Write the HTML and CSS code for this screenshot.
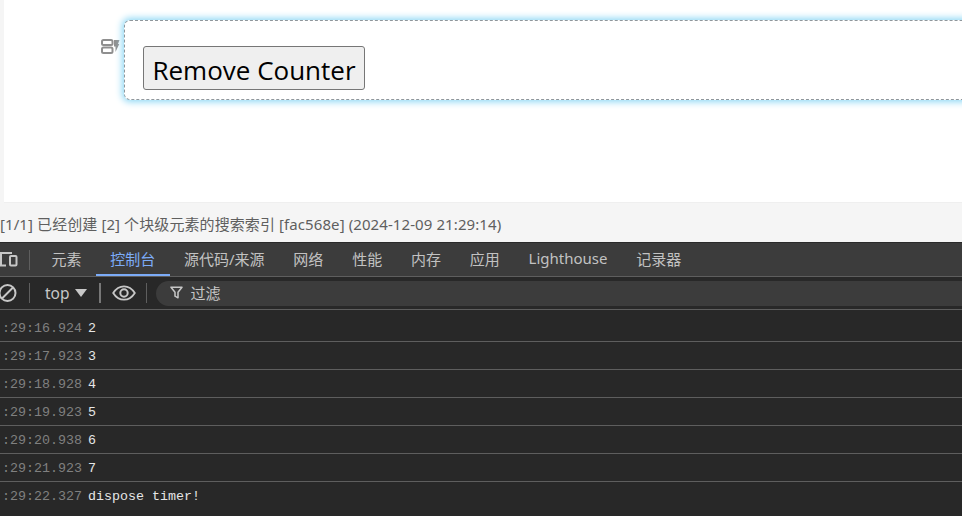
FILE: index.html
```html
<!DOCTYPE html>
<html lang="zh">
<head>
<meta charset="utf-8">
<title>Remove Counter</title>
<link rel="stylesheet" href="styles.css">
</head>
<body>
<main class="editor">
  <div class="block-row">
    <svg class="block-icon" width="19" height="15" viewBox="0 0 19 15" aria-hidden="true">
      <rect x="1" y="1" width="10.500" height="5" rx="1.500" fill="none" stroke="#8f8f8f" stroke-width="2"/>
      <rect x="1" y="8.500" width="10.500" height="5.500" rx="1.500" fill="none" stroke="#8f8f8f" stroke-width="2"/>
      <path d="M13 1H18.500L17 5H18.300L14.500 13V7.500H13Z" fill="#8f8f8f"/>
    </svg>
    <div class="block">
      <button class="remove" type="button">Remove Counter</button>
    </div>
  </div>
</main>
<div class="status">[1/1] 已经创建 [2] 个块级元素的搜索索引 [fac568e] (2024-12-09 21:29:14)</div>
<section class="devtools">
  <nav class="tabs">
    <svg class="device" width="18" height="17" viewBox="0 0 18 17" aria-hidden="true">
      <path d="M-2 2H12M-2 14.500H6M1 2V14.500" fill="none" stroke="#c7c7c7" stroke-width="2"/>
      <rect x="10" y="5" width="6.500" height="9.500" rx="1" fill="none" stroke="#c7c7c7" stroke-width="2"/>
    </svg>
    <span class="divider"></span>
    <a class="tab">元素</a>
    <a class="tab active">控制台</a>
    <a class="tab">源代码/来源</a>
    <a class="tab">网络</a>
    <a class="tab">性能</a>
    <a class="tab">内存</a>
    <a class="tab">应用</a>
    <a class="tab">Lighthouse</a>
    <a class="tab">记录器</a>
  </nav>
  <div class="toolbar">
    <svg class="clear" width="17" height="20" viewBox="0 0 17 20" aria-hidden="true">
      <circle cx="7.500" cy="10" r="8" fill="none" stroke="#c7c7c7" stroke-width="2"/>
      <path d="M2 15.500L13 4.500" stroke="#c7c7c7" stroke-width="2"/>
    </svg>
    <span class="sep first"></span>
    <span class="context">top</span>
    <span class="caret"></span>
    <span class="sep strong"></span>
    <svg class="eye" width="24" height="16" viewBox="0 0 24 16" aria-hidden="true">
      <path d="M1.200 8C4 3.500 7.700 1.300 12 1.300S20 3.500 22.800 8C20 12.500 16.300 14.700 12 14.700S4 12.500 1.200 8Z" fill="none" stroke="#c7c7c7" stroke-width="1.800"/>
      <circle cx="12" cy="8" r="3.700" fill="none" stroke="#c7c7c7" stroke-width="2"/>
    </svg>
    <span class="sep"></span>
    <div class="filter">
      <svg width="13" height="13" viewBox="0 0 13 13" aria-hidden="true">
        <path d="M1 1.200H12L8 6.200V11.800L5 10.200V6.200Z" fill="none" stroke="#c7c7c7" stroke-width="1.500" stroke-linejoin="round"/>
      </svg>
      <span>过滤</span>
    </div>
  </div>
  <ul class="log">
    <li><time>:29:16.924</time><span>2</span></li>
    <li><time>:29:17.923</time><span>3</span></li>
    <li><time>:29:18.928</time><span>4</span></li>
    <li><time>:29:19.923</time><span>5</span></li>
    <li><time>:29:20.938</time><span>6</span></li>
    <li><time>:29:21.923</time><span>7</span></li>
    <li><time>:29:22.327</time><span>dispose timer!</span></li>
  </ul>
</section>
</body>
</html>
```
FILE: styles.css
```css
* {
  box-sizing: border-box;
}

html,
body {
  margin: 0;
  height: 100%;
  overflow: hidden;
}

body {
  display: flex;
  flex-direction: column;
  width: 962px;
  height: 516px;
  font-family: "Noto Sans", "Noto Sans CJK SC", sans-serif;
  background: #fff;
}

.editor {
  height: 203px;
  flex: none;
  padding: 20px 0 0 4px;
  background: #fff;
  box-shadow: inset 4px 0 0 #f5f5f5, inset 0 -1px 0 #efefef;
}

.block-row {
  display: flex;
  align-items: flex-start;
  padding-left: 97px;
}

.block-icon {
  flex: none;
  margin-top: 19px;
  margin-right: 4px;
}

.block {
  flex: 1;
  height: 80px;
  margin-right: -20px;
  padding: 25px 0 0 18px;
  border: 1px dashed #8f979c;
  border-radius: 6px;
  background: #fff;
  box-shadow: 0 0 7px 2px #8fd8f5;
}

.remove {
  display: block;
  width: 222px;
  height: 44px;
  padding: 3px 0 0;
  font-family: "Open Sans", "Noto Sans", sans-serif;
  font-size: 26px;
  line-height: 1;
  color: #000;
  background: #efefef;
  border: 1px solid #767676;
  border-radius: 3px;
}

.status {
  flex: none;
  height: 39px;
  padding-top: 10px;
  font-size: 15px;
  line-height: 22px;
  letter-spacing: .09px;
  white-space: nowrap;
  color: #5f5f5f;
  background: #f5f5f5;
}

.devtools {
  flex: 1;
  min-height: 0;
  display: flex;
  flex-direction: column;
  background: #282828;
}

.tabs {
  flex: none;
  height: 35px;
  display: flex;
  align-items: stretch;
  background: #3c3c3c;
  border-top: 1px solid #2a2a2a;
  border-bottom: 1px solid #5e5e5e;
}

.device {
  flex: none;
  align-self: center;
  margin-right: 11px;
}

.divider {
  flex: none;
  align-self: center;
  width: 1px;
  height: 20px;
  margin-right: 7px;
  background: #5e5e5e;
}

.tab {
  display: flex;
  align-items: center;
  padding: 0 14.400px 3px;
  font-size: 15px;
  white-space: nowrap;
  color: #c2c2c2;
}

.tab.active {
  color: #7cacf8;
  box-shadow: inset 0 -2px 0 #7cacf8;
}

.toolbar {
  flex: none;
  height: 33px;
  display: flex;
  align-items: center;
  background: #282828;
  border-bottom: 1px solid #5e5e5e;
  color: #c7c7c7;
}

.clear {
  flex: none;
}

.sep {
  flex: none;
  width: 1px;
  height: 20px;
  margin: 0 9px 0 10px;
  background: #5e5e5e;
}

.sep.first {
  margin: 0 15px 0 12px;
}

.sep.strong {
  width: 2px;
  margin: 0 11px 0 12px;
  background: #777;
}

.context {
  font-size: 15.500px;
}

.caret {
  width: 0;
  height: 0;
  margin-left: 5px;
  border-left: 6px solid transparent;
  border-right: 6px solid transparent;
  border-top: 8px solid #c7c7c7;
}

.eye {
  flex: none;
}

.filter {
  flex: 1;
  height: 25px;
  display: flex;
  align-items: center;
  gap: 8px;
  margin-right: -20px;
  padding: 0 0 1px 14px;
  border-radius: 13px;
  background: #3c3c3c;
  font-size: 15px;
}

.log {
  flex: 1;
  min-height: 0;
  margin: 0;
  padding: 4px 0 0;
  list-style: none;
  font-family: "Liberation Mono", "DejaVu Sans Mono", monospace;
  font-size: 13.333px;
}

.log li {
  height: 28px;
  display: flex;
  align-items: center;
  gap: 6px;
  padding: 2px 0 0 2px;
  color: #e6e6e6;
  white-space: pre;
  border-bottom: 1px solid #5e5e5e;
}

.log li:last-child {
  padding-top: 0;
  border-bottom: 0;
}

.log time {
  color: #808080;
}
```
